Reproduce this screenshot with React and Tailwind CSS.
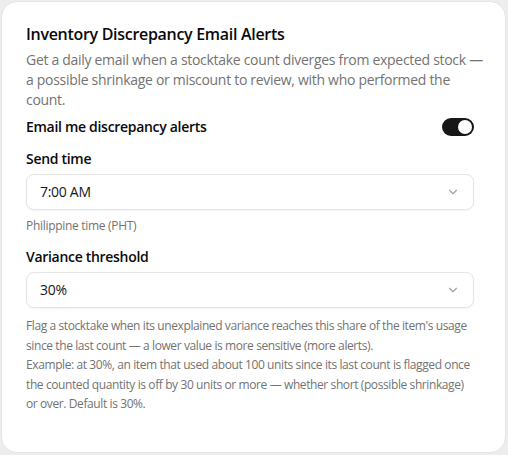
import React, { useState } from 'react';

function Chevron() {
    return (
        <svg width="14" height="14" viewBox="0 0 24 24" fill="none" stroke="#a3a3a3" strokeWidth="2" strokeLinecap="round" strokeLinejoin="round">
            <path d="m6 9 6 6 6-6" />
        </svg>
    );
}

function SelectBox({ value }) {
    return (
        <div className="h-9 flex items-center justify-between px-[13px] rounded-lg border border-[#e5e5e5] bg-white shadow-[0_1px_2px_rgba(0,0,0,0.05)]">
            <span className="text-sm text-[#171717] tracking-[-0.3px]">{value}</span>
            <Chevron />
        </div>
    );
}

function App() {
    const [enabled, setEnabled] = useState(true);

    return (
        <div className="min-h-screen bg-[#ededed] p-px" style={{ fontFamily: '"Open Sans", "Noto Sans", sans-serif' }}>
            <div className="h-[452px] w-[505px] rounded-2xl border border-[#e5e5e5] bg-white pl-6 pt-5">
                <div className="w-[448px]">
                    <h2 className="text-base leading-6 font-semibold text-[#0a0a0a] tracking-[-0.3px]">Inventory Discrepancy Email Alerts</h2>
                    <p className="mt-1 w-[462px] text-sm leading-5 text-[#737373] tracking-[-0.3px]">
                        Get a daily email when a stocktake count diverges from expected stock — a possible shrinkage or miscount to review, with who performed the count.
                    </p>

                    <div className="mt-[7px] flex items-center justify-between h-5">
                        <span className="text-sm font-semibold text-[#0a0a0a] tracking-[-0.3px]">Email me discrepancy alerts</span>
                        <button
                            onClick={() => setEnabled(!enabled)}
                            className={`w-8 h-[18px] rounded-full flex items-center px-[2px] ${enabled ? 'bg-[#171717] justify-end' : 'bg-[#e5e5e5] justify-start'}`}
                        >
                            <span className="block w-[14px] h-[14px] rounded-full bg-white"></span>
                        </button>
                    </div>

                    <div className="mt-3 h-5 text-sm leading-5 font-semibold text-[#0a0a0a] tracking-[-0.3px]">Send time</div>
                    <div className="mt-[5px]">
                        <SelectBox value="7:00 AM" />
                    </div>
                    <p className="mt-2 text-xs leading-4 text-[#737373] tracking-[-0.3px]">Philippine time (PHT)</p>

                    <div className="mt-[13px] h-5 text-sm leading-5 font-semibold text-[#0a0a0a] tracking-[-0.3px]">Variance threshold</div>
                    <div className="mt-[5px]">
                        <SelectBox value="30%" />
                    </div>
                    <p className="mt-2 text-xs leading-[19.5px] text-[#737373] tracking-[-0.4px]">
                        Flag a stocktake when its unexplained variance reaches this share of the item's usage since the last count — a lower value is more sensitive (more alerts).
                        <br />
                        Example: at 30%, an item that used about 100 units since its last count is flagged once the counted quantity is off by 30 units or more — whether short (possible shrinkage) or over. Default is 30%.
                    </p>
                </div>
            </div>
        </div>
    );
}

export default App;
